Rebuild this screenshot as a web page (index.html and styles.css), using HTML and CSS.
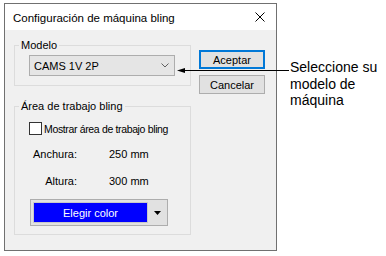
FILE: index.html
```html
<!DOCTYPE html>
<html lang="es">
<head>
<meta charset="utf-8">
<link rel="stylesheet" href="styles.css">
</head>
<body>
<div class="page">
  <div class="dialog">
    <div class="titlebar">
      <span class="title">Configuración de máquina bling</span>
      <svg class="close" width="10" height="10" viewBox="0 0 10 10"><path d="M0.5 0.5L9.5 9.5M9.5 0.5L0.5 9.5" stroke="#000" stroke-width="1" fill="none"/></svg>
    </div>
    <div class="body">
      <div class="leftcol">
        <fieldset class="group g1">
          <legend>Modelo</legend>
          <div class="combo">
            <span>CAMS 1V 2P</span>
            <svg class="chev" width="8" height="5" viewBox="0 0 8 5"><path d="M0.5 0.5L4 4L7.5 0.5" stroke="#606060" stroke-width="1" fill="none"/></svg>
          </div>
        </fieldset>
        <fieldset class="group g2">
          <legend>Área de trabajo bling</legend>
          <div class="check"><span class="box"></span><span class="cklabel">Mostrar área de trabajo bling</span></div>
          <div class="row"><span class="lbl">Anchura:</span><span class="val">250 mm</span></div>
          <div class="row r2"><span class="lbl">Altura:</span><span class="val">300 mm</span></div>
          <div class="colorbtn">
            <div class="swatch">Elegir color</div>
            <div class="drop"><svg width="7" height="4" viewBox="0 0 7 4"><path d="M0 0H7L3.5 4Z" fill="#000"/></svg></div>
          </div>
        </fieldset>
      </div>
      <div class="rightcol">
        <div class="btn primary">Aceptar</div>
        <div class="btn">Cancelar</div>
      </div>
    </div>
  </div>
  <div class="callout">
    <div class="arrow">
      <svg width="112" height="7" viewBox="0 0 112 7"><path d="M0 3.5L8 1V6Z" fill="#000"/><path d="M4 3.5H112" stroke="#000" stroke-width="1"/></svg>
    </div>
    <p class="note">Seleccione su<br>modelo de<br>máquina</p>
  </div>
</div>
</body>
</html>
```
FILE: styles.css
```css
html, body {
  margin: 0;
  padding: 0;
  background: #fff;
}
.page {
  display: flex;
  padding: 3px 0 0 4px;
  position: relative;
}
.dialog {
  width: 271px;
  height: 246px;
  border: 1px solid #707070;
  background: #f0f0f0;
  font-family: "Liberation Sans", Arial, sans-serif;
  font-size: 11px;
  color: #000;
  display: flex;
  flex-direction: column;
}
.titlebar {
  height: 26px;
  background: #fff;
  display: flex;
  align-items: center;
  padding: 0 11px 0 8px;
}
.title {
  flex: 1;
  font-size: 11.5px;
  padding-top: 1px;
}
.close {
  display: block;
}
.body {
  display: flex;
  padding: 0 0 0 9px;
  gap: 8px;
}
.leftcol {
  width: 177px;
  display: flex;
  flex-direction: column;
  padding-top: 9px;
  gap: 14px;
}
.group {
  margin: 0;
  padding: 0;
  border: 1px solid #dcdcdc;
  min-width: 0;
}
.group legend {
  padding: 0 2px;
  margin-left: 4px;
  line-height: 13px;
}
.g1 {
  height: 45px;
}
.combo {
  margin: 3px 0 0 14px;
  height: 19px;
  border: 1px solid #adadad;
  background: #e5e5e5;
  display: flex;
  align-items: center;
  padding: 0 0 0 4px;
  width: 140px;
}
.combo span {
  flex: 1;
}
.chev {
  margin-right: 5px;
  display: block;
}
.g2 {
  height: 133px;
}
.check {
  display: flex;
  align-items: center;
  margin: 9px 0 0 14px;
  white-space: nowrap;
  width: 140px;
}
.cklabel {
  letter-spacing: -0.35px;
  font-size: 10.5px;
}
.box {
  width: 11px;
  height: 11px;
  border: 1px solid #333;
  background: #fff;
  margin-right: 2px;
  flex: none;
}
.row {
  display: flex;
  margin-top: 13px;
  height: 13px;
  line-height: 13px;
}
.r2 {
  margin-top: 14px;
}
.lbl {
  width: 62px;
  text-align: right;
}
.val {
  margin-left: 32px;
}
.colorbtn {
  margin: 11px 0 0 15px;
  width: 134px;
  height: 25px;
  border: 1px solid #adadad;
  background: #e1e1e1;
  display: flex;
  align-items: center;
  padding-left: 2px;
}
.swatch {
  width: 115px;
  height: 21px;
  background: #0000ff;
  border: 1px solid #c8c8c8;
  color: #fff;
  display: flex;
  align-items: center;
  justify-content: center;
  box-sizing: border-box;
}
.drop {
  flex: 1;
  display: flex;
  justify-content: center;
  align-items: center;
}
.drop svg {
  display: block;
}
.rightcol {
  display: flex;
  flex-direction: column;
  gap: 6px;
  padding-top: 20px;
}
.btn {
  width: 64px;
  height: 17px;
  border: 1px solid #adadad;
  background: #e1e1e1;
  display: flex;
  align-items: center;
  justify-content: center;
}
.btn.primary {
  width: 62px;
  height: 15px;
  border: 2px solid #0078d7;
}
.callout {
  margin-left: 13px;
  padding-top: 56px;
}
.note {
  margin: 0;
  font-family: "Liberation Sans", Arial, sans-serif;
  font-size: 14px;
  line-height: 16.5px;
  color: #000;
}
.arrow {
  position: absolute;
  left: 177px;
  top: 67px;
}
.arrow svg {
  display: block;
}
```
